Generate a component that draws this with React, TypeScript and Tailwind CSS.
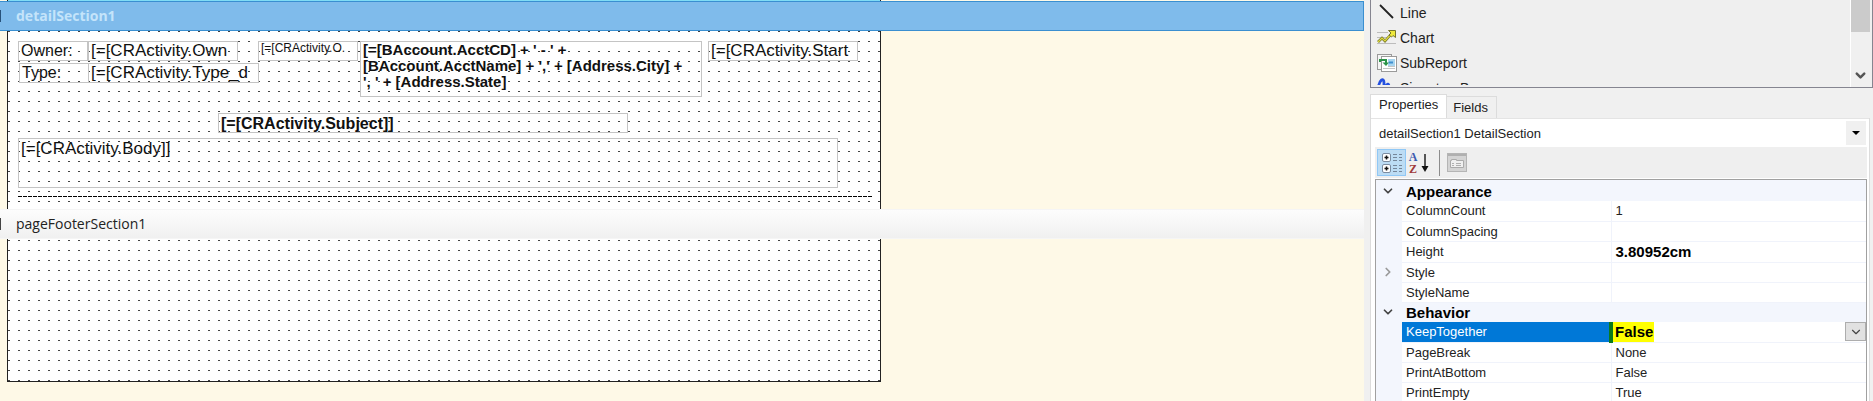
import { useState } from "react";
import type { ReactNode } from "react";
import { ChevronDown, ChevronRight } from "lucide-react";

interface ReportField {
  id: string;
  text: string;
  className: string;
}

interface PropertyRow {
  name: string;
  value?: string;
  bold?: boolean;
  expandable?: boolean;
  editing?: boolean;
}

interface PropertyGroup {
  title: string;
  rows: PropertyRow[];
}

const fields: ReportField[] = [
  { id: "ownerLabel", text: "Owner:", className: "left-[10px] top-[10px] w-[70px] h-5 text-base leading-[18px]" },
  { id: "owner", text: "[=[CRActivity.Own", className: "left-[80px] top-[10px] w-[150px] h-5 text-[17px] leading-[18px]" },
  { id: "ownerSmall", text: "[=[CRActivity.O.", className: "left-[250px] top-[10px] w-[100px] h-5 text-xs leading-3" },
  {
    id: "account",
    text: "[=[BAccount.AcctCD] + ' - ' +\n[BAccount.AcctName] + ',' + [Address.City] +\n', ' + [Address.State]",
    className: "left-[352px] top-[10px] w-[342px] h-14 text-[15px] leading-4 font-bold",
  },
  { id: "start", text: "[=[CRActivity.Start", className: "left-[700px] top-[10px] w-[150px] h-5 text-[17px] leading-[18px]" },
  { id: "typeLabel", text: "Type:", className: "left-[11px] top-[32px] w-[70px] h-5 text-base leading-[18px]" },
  { id: "type", text: "[=[CRActivity.Type_d", className: "left-[80px] top-[32px] w-[171px] h-5 text-[17px] leading-[18px]" },
  { id: "subject", text: "[=[CRActivity.Subject]]", className: "left-[210px] top-[82px] w-[410px] h-5 text-base leading-5 font-bold" },
  { id: "body", text: "[=[CRActivity.Body]]", className: "left-[10px] top-[107px] w-[820px] h-[50px] text-[17px] leading-5" },
];

const groups: PropertyGroup[] = [
  {
    title: "Appearance",
    rows: [
      { name: "ColumnCount", value: "1" },
      { name: "ColumnSpacing" },
      { name: "Height", value: "3.80952cm", bold: true },
      { name: "Style", expandable: true },
      { name: "StyleName" },
    ],
  },
  {
    title: "Behavior",
    rows: [
      { name: "KeepTogether", value: "False", editing: true },
      { name: "PageBreak", value: "None" },
      { name: "PrintAtBottom", value: "False" },
      { name: "PrintEmpty", value: "True" },
    ],
  },
];

const dots =
  "bg-[conic-gradient(from_270deg_at_2px_1px,#444_90deg,transparent_0)] bg-size-[10px_10px]";

function LineIcon() {
  return (
    <svg width="20" height="20" viewBox="0 0 20 20">
      <path d="M3 2 L16 15" stroke="#222" strokeWidth="1.8" />
    </svg>
  );
}

function ChartIcon() {
  return (
    <svg width="20" height="20" viewBox="0 0 20 20" fill="none">
      <path d="M0 4.500H11M0 9.500H11M0 15.500H19" stroke="#bcbcbc" />
      <path d="M1 14 L5 10 L8 13 L16 4" stroke="#77772a" strokeWidth="2.600" />
      <path d="M1 14 L5 10 L8 13 L16 4" stroke="#e0dc3c" strokeWidth="1.200" />
      <path d="M11.500 2.500H18.500V9.500L16 7.500L14.500 9L12 7L14 5Z" fill="#eee83c" stroke="#77772a" />
    </svg>
  );
}

function SubReportIcon() {
  return (
    <svg width="20" height="20" viewBox="0 0 20 20" fill="none">
      <rect x=".5" y="1.500" width="14" height="15" fill="#f5f5f5" stroke="#9a9a9a" />
      <rect x="4.500" y="3.500" width="15" height="15" fill="#fff" stroke="#9a9a9a" />
      <rect x="11" y="6" width="7" height="7" fill="#a8d5ef" />
      <path d="M12 9.500h4" stroke="#3f8fd0" strokeWidth="2" />
      <path d="M6 15.500h12M11 13.500h7" stroke="#c4c4c4" />
      <path d="M3 9V7H9V10" stroke="#2b9348" strokeWidth="2" />
      <path d="M5.500 9.500H12L9 13Z" fill="#2b9348" />
    </svg>
  );
}

function SignatureIcon() {
  return (
    <svg width="20" height="20" viewBox="0 0 20 20" fill="none">
      <path d="M1 12 C2 1 7 -1 7 5 C7 9 6 14 8 10 C10 5 12 5 12 9 C13 13 15 8 18 9" stroke="#2450e0" strokeWidth="2.800" />
    </svg>
  );
}

function CategorizedIcon() {
  return (
    <svg width="22" height="22" viewBox="0 0 22 22" fill="none">
      {[1, 12].map((y) => (
        <g key={y}>
          <rect x="1.500" y={y + 0.5} width="8" height="8" rx="1.500" fill="#fff" stroke="#7b8ca0" />
          <path d={`M3.500 ${y + 4.5}h4M5.500 ${y + 2.5}v4`} stroke="#111" strokeWidth="1.500" />
          <path
            d={`M12 ${y + 1.5}h4M18 ${y + 1.5}h3M12 ${y + 4.5}h4M18 ${y + 4.5}h3M12 ${y + 7.5}h4M18 ${y + 7.5}h3`}
            stroke="#75869a"
          />
        </g>
      ))}
    </svg>
  );
}

function SortArrow() {
  return (
    <svg width="8" height="20" viewBox="0 0 8 20">
      <path d="M4 1V15" stroke="#222" strokeWidth="1.500" />
      <path d="M.5 13H7.500L4 19Z" fill="#111" />
    </svg>
  );
}

function PropertyPagesIcon() {
  return (
    <svg width="20" height="20" viewBox="0 0 20 20" fill="none">
      <rect x=".5" y=".5" width="19" height="18" fill="#d4d4d4" stroke="#b5b5b5" />
      <path d="M1 2H19" stroke="#b0b0b0" strokeWidth="2" />
      <path d="M3.500 14.500V7.500H4.500V6.500H9.500V7.500H16.500V14.500Z" fill="#f0f0f0" stroke="#ababab" />
      <path d="M5 10.500h2M9 10.500h5M5 12.500h2M9 12.500h5" stroke="#b0b0b0" />
    </svg>
  );
}

function SectionHeader({ name, selected }: { name: string; selected?: boolean }) {
  return (
    <button
      className={
        "flex w-full h-[30px] shrink-0 items-center border-y text-left font-['Open_Sans',sans-serif] text-sm " +
        (selected
          ? "border-[#3a8fd0] border-r bg-[#7fbbeb] text-[#c4e4fa] font-bold"
          : "border-[#f5f5f5] bg-linear-to-b from-[#fdfdfd] to-[#f0f0f0] text-[#222]")
      }
    >
      <span className={"h-3 w-px " + (selected ? "bg-[#28527a]" : "bg-[#444]")} />
      <span className="pl-[15px]">{name}</span>
    </button>
  );
}

function Designer() {
  return (
    <main className="flex min-w-0 flex-1 flex-col overflow-hidden bg-[#fef9e7]">
      <div className="ml-[7px] h-px w-[874px] shrink-0 border-x border-[#222] bg-[#7fdcf5]" />
      <SectionHeader name="detailSection1" selected />
      <section className={"relative ml-[7px] h-[178px] w-[874px] shrink-0 border-x border-[#222] bg-white " + dots}>
        {fields.map((f) => (
          <div
            key={f.id}
            className={"absolute overflow-hidden whitespace-pre border border-[#c4c4c4] pl-[2px] text-[#111] " + f.className}
          >
            {f.text}
          </div>
        ))}
        <div className="absolute left-[10px] right-[8px] top-[165px] h-px bg-[repeating-linear-gradient(90deg,#000_0_4px,transparent_4px_5px)]" />
      </section>
      <SectionHeader name="pageFooterSection1" />
      <section
        className={"ml-[7px] h-[143px] w-[874px] shrink-0 border-x border-b border-[#222] bg-white bg-position-[0px_1px] " + dots}
      />
    </main>
  );
}

function ToolItem({ icon, label }: { icon: ReactNode; label: string }) {
  return (
    <li>
      <button className="flex h-[25px] items-center gap-[3px] pl-1.5 text-sm text-[#222]">
        {icon}
        {label}
      </button>
    </li>
  );
}

function Toolbox() {
  return (
    <div className="flex h-[88px] shrink-0 overflow-hidden border-x border-b border-[#858590] bg-[#efefef]">
      <ul className="mb-0.5 flex-1 overflow-hidden">
        <ToolItem icon={<LineIcon />} label="Line" />
        <ToolItem icon={<ChartIcon />} label="Chart" />
        <ToolItem icon={<SubReportIcon />} label="SubReport" />
        <ToolItem icon={<SignatureIcon />} label="SignatureBox" />
      </ul>
      <div className="mr-0.5 flex w-5 flex-col items-center justify-between border-l border-white bg-[#f0f0f0]">
        <div className="h-8 w-full bg-[#cbcbcb]" />
        <ChevronDown size={15} strokeWidth={4} className="mb-1 text-[#555]" />
      </div>
    </div>
  );
}

function PropertyGrid() {
  const [keepTogether, setKeepTogether] = useState("False");

  return (
    <div className="ml-1 mr-[2px] mt-px border border-[#a0a0a0] bg-[#f3f6fd] pt-px">
      <table className="w-full table-fixed border-collapse text-[13px] leading-[19px] text-[#222]">
        <colgroup>
          <col className="w-[26px]" />
          <col className="w-[209px]" />
          <col />
        </colgroup>
        {groups.map((group) => (
          <tbody key={group.title}>
            <tr className="h-5">
              <td className="p-0">
                <ChevronDown size={14} strokeWidth={3} className="ml-[5px] text-[#444]" />
              </td>
              <th colSpan={2} className="p-0 pl-1 text-left text-[15px] font-bold text-black">
                {group.title}
              </th>
            </tr>
            {group.rows.map((row) => (
              <tr key={row.name} className="h-5">
                <td className="p-0">
                  {row.expandable && <ChevronRight size={14} strokeWidth={3} className="ml-[5px] text-[#999]" />}
                </td>
                <td
                  className={
                    "border-b border-[#f0f3fb] p-0 pl-1 " +
                    (row.editing ? "border-r-4 border-r-[#0a7a1c] bg-[#0078d7] text-white" : "border-r bg-white")
                  }
                >
                  {row.editing ? <label htmlFor="keepTogether">{row.name}</label> : row.name}
                </td>
                <td className="border-b border-[#f0f3fb] bg-white p-0">
                  {row.editing ? (
                    <div className="relative flex h-[19px] justify-between">
                      <select
                        id="keepTogether"
                        value={keepTogether}
                        onChange={(e) => setKeepTogether(e.target.value)}
                        className="h-5 w-[41px] appearance-none bg-[#ffff00] pl-0.5 text-[15px] leading-5 font-bold text-black"
                      >
                        <option>False</option>
                        <option>True</option>
                      </select>
                      <span className="flex w-[21px] items-center justify-center border border-[#adadad] bg-[#e1e1e1]">
                        <ChevronDown size={14} className="text-[#444]" />
                      </span>
                    </div>
                  ) : (
                    <span className={"pl-1 " + (row.bold ? "text-[15px] font-bold text-black" : "")}>{row.value}</span>
                  )}
                </td>
              </tr>
            ))}
          </tbody>
        ))}
      </table>
    </div>
  );
}

function PropertiesPanel() {
  const [tab, setTab] = useState("Properties");

  return (
    <div className="mr-[3px] flex min-h-0 flex-1 flex-col pt-1.5">
      <div className="flex h-6 shrink-0 items-end text-[13px] text-[#222]" role="tablist">
        <button
          role="tab"
          aria-selected={tab === "Properties"}
          onClick={() => setTab("Properties")}
          className="h-6 border-x border-t border-[#dcdcdc] bg-white px-2 pb-1"
        >
          Properties
        </button>
        <button
          role="tab"
          aria-selected={tab === "Fields"}
          onClick={() => setTab("Fields")}
          className="h-[22px] border-r border-t border-[#dcdcdc] bg-[#f0f0f0] pl-1.5 pr-2"
        >
          Fields
        </button>
      </div>
      <div className="flex-1 border-x border-[#dcdcdc] bg-white">
        <div className="relative flex h-[29px] items-center border-t border-[#e4e4e4]">
          <select
            aria-label="Component"
            className="h-full w-full appearance-none bg-transparent pt-0.5 pl-2 text-[13px] text-[#222]"
          >
            <option>detailSection1 DetailSection</option>
          </select>
          <span className="pointer-events-none absolute right-[3px] flex h-6 w-5 items-center justify-center bg-[#f0f0f0]">
            <svg width="8" height="4" viewBox="0 0 8 4">
              <path d="M0 0H8L4 4Z" fill="#000" />
            </svg>
          </span>
        </div>
        <div className="ml-1 mr-[2px] flex h-[31px] items-center bg-[#efefef] pl-0.5">
          <button aria-label="Categorized" className="flex h-[27px] w-[29px] items-center justify-center border border-[#90c8f6] bg-[#bcdcf4]">
            <CategorizedIcon />
          </button>
          <button aria-label="Alphabetical" className="flex w-[26px] items-center justify-center gap-1">
            <span className="flex flex-col font-['Liberation_Serif',serif] text-xs leading-3 font-bold">
              <span className="text-[#3d5ab0]">A</span>
              <span className="text-[#a03a3a]">Z</span>
            </span>
            <SortArrow />
          </button>
          <span className="mx-[7px] h-[26px] w-px bg-[#8c8c8c]" />
          <button aria-label="Property Pages" disabled>
            <PropertyPagesIcon />
          </button>
        </div>
        <PropertyGrid />
      </div>
    </div>
  );
}

export default function App() {
  return (
    <div className="flex h-screen overflow-hidden bg-[#f0f0f0] font-['Liberation_Sans',Arial,sans-serif]">
      <Designer />
      <aside className="ml-[6px] flex w-[503px] shrink-0 flex-col">
        <Toolbox />
        <PropertiesPanel />
      </aside>
    </div>
  );
}
